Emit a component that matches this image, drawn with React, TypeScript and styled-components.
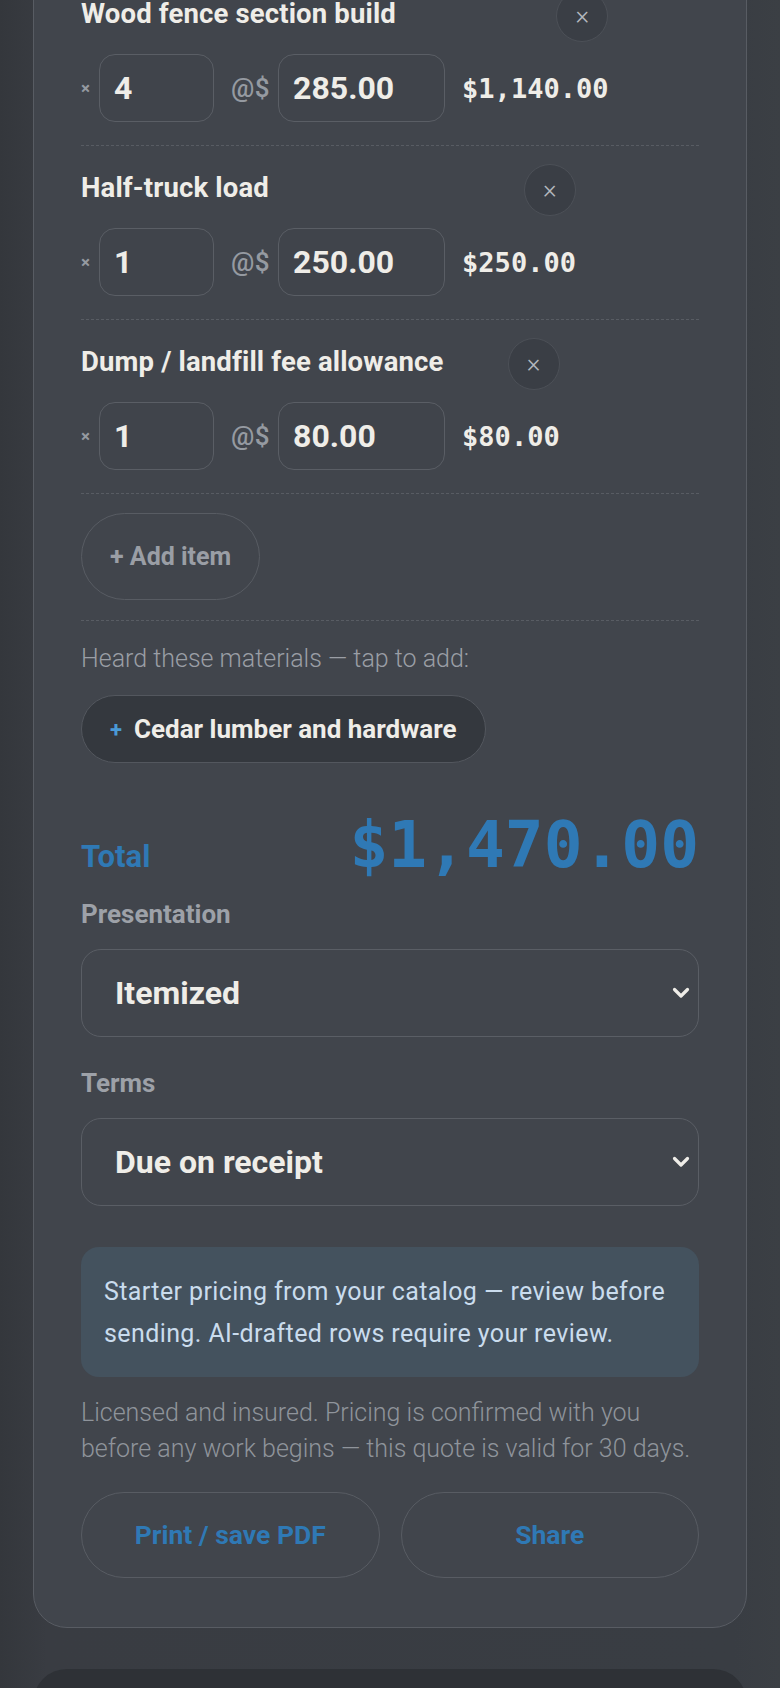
import styled, { createGlobalStyle } from 'styled-components';

const GlobalStyle = createGlobalStyle`
  * {
    box-sizing: border-box;
  }
  html, body {
    margin: 0;
    padding: 0;
  }
  body {
    background: linear-gradient(90deg, #34373c 0%, #393c42 6%, #393d43 94%, #3b3f44 100%);
    font-family: Roboto, "Liberation Sans", sans-serif;
    color: #eeece7;
    overflow: hidden;
  }
`;

const Page = styled.main`
  margin-top: -78px;
  padding: 0 33px;
`;

const Card = styled.section`
  background: #41454c;
  border: 1px solid #585c63;
  border-radius: 34px;
  padding: 48px 47px 49px;
`;

const ItemList = styled.div`
  border-top: 1px dashed #585c63;
`;

const ItemRow = styled.div`
  display: grid;
  grid-template-columns: auto auto;
  justify-content: start;
  align-items: center;
  column-gap: 17px;
  row-gap: 12px;
  padding: 18px 0 23px;
  border-bottom: 1px dashed #585c63;
`;

const ItemName = styled.div`
  margin-bottom: 6px;
  font-size: 27.5px;
  font-weight: 700;
  letter-spacing: 0.15px;
  line-height: 1.2;
  color: #efede8;
`;

const RemoveButton = styled.button`
  justify-self: end;
  width: 52px;
  height: 52px;
  border-radius: 50%;
  border: 1px solid #4c5057;
  background: #3a3e45;
  color: #b4b8be;
  font-family: Roboto, sans-serif;
  font-size: 26px;
  font-weight: 300;
  line-height: 1;
  padding: 0 0 2px;
  display: flex;
  align-items: center;
  justify-content: center;
`;

const QtyLine = styled.div`
  display: flex;
  align-items: center;
`;

const Times = styled.span`
  width: 10px;
  margin-right: 8px;
  font-size: 17px;
  font-weight: 700;
  color: #959aa1;
`;

const At = styled.span`
  margin: 0 8px 0 17px;
  font-size: 26px;
  font-weight: 500;
  letter-spacing: 0.5px;
  color: #959aa1;
`;

const NumberInput = styled.input<{ $width: number }>`
  width: ${(p) => p.$width}px;
  height: 68px;
  padding: 0 14px;
  border: 1.5px solid #5a5e65;
  border-radius: 16px;
  background: #40444b;
  color: #efede8;
  font-family: Roboto, sans-serif;
  font-size: 32px;
  font-weight: 700;
  outline: none;
`;

const LineTotal = styled.span`
  font-family: "DejaVu Sans Mono", "Liberation Mono", monospace;
  font-size: 27px;
  font-weight: 700;
  color: #efede8;
`;

const AddRow = styled.div`
  padding: 19px 0 20px;
  border-bottom: 1px dashed #585c63;
`;

const AddButton = styled.button`
  height: 87px;
  padding: 0 28px;
  border-radius: 44px;
  border: 1.5px solid #585c63;
  background: transparent;
  color: #9a9ea5;
  font-family: Roboto, sans-serif;
  font-size: 25px;
  font-weight: 700;
`;

const Hint = styled.p`
  margin: 21px 0 0;
  font-size: 25px;
  font-weight: 300;
  line-height: 34px;
  color: #9a9ea5;
`;

const Chip = styled.button`
  margin-top: 19px;
  height: 68px;
  padding: 0 28px;
  display: inline-flex;
  align-items: center;
  gap: 12px;
  border-radius: 34px;
  border: 1.5px solid #53575e;
  background: #34383e;
  color: #efede8;
  font-family: Roboto, sans-serif;
  font-size: 26px;
  font-weight: 700;
`;

const ChipPlus = styled.span`
  color: #4a9ad6;
  font-size: 22px;
`;

const TotalRow = styled.div`
  margin-top: 50px;
  display: flex;
  justify-content: space-between;
  align-items: baseline;
`;

const TotalLabel = styled.span`
  font-size: 31px;
  font-weight: 700;
  color: #2f79b5;
`;

const TotalValue = styled.span`
  font-family: "DejaVu Sans Mono", "Liberation Mono", monospace;
  font-size: 64.5px;
  font-weight: 700;
  line-height: 1;
  color: #2f79b5;
`;

const Field = styled.div`
  margin-top: 21px;
  & + & {
    margin-top: 31px;
  }
`;

const FieldLabel = styled.div`
  font-size: 26px;
  font-weight: 700;
  line-height: 30px;
  color: #9da1a8;
`;

const SelectBox = styled.div`
  margin-top: 20px;
  height: 88px;
  padding: 0 8px 0 33px;
  display: flex;
  align-items: center;
  justify-content: space-between;
  border: 1.5px solid #5a5e65;
  border-radius: 20px;
  font-size: 32px;
  font-weight: 700;
  color: #efede8;
`;

const Notice = styled.div`
  margin-top: 41px;
  padding: 24px 23px 22px;
  border-radius: 18px;
  background: #44525e;
  color: #cadced;
  font-size: 25px;
  letter-spacing: 0.4px;
  line-height: 42px;
`;

const Fineprint = styled.p`
  margin: 18px 0 0;
  font-size: 25px;
  font-weight: 300;
  line-height: 36px;
  color: #8f949b;
`;

const Actions = styled.div`
  margin-top: 25px;
  display: grid;
  grid-template-columns: 1fr 1fr;
  gap: 21px;
`;

const ActionButton = styled.button`
  height: 86px;
  border-radius: 43px;
  border: 1.5px solid #585c63;
  background: transparent;
  color: #2f79b5;
  font-family: Roboto, sans-serif;
  font-size: 26.5px;
  font-weight: 700;
`;

const NextPanel = styled.div`
  margin-top: 41px;
  height: 120px;
  border-radius: 34px 34px 0 0;
  background: #2e3136;
`;

const Chevron = () => (
  <svg width="18" height="12" viewBox="0 0 18 12" fill="none">
    <path d="M2.5 2.5 L9 9 L15.5 2.5" stroke="#efede8" strokeWidth="3.2" strokeLinecap="round" strokeLinejoin="round" />
  </svg>
);

type LineItem = { name: string; qty: string; price: string; total: string };

const items: LineItem[] = [
  { name: 'Wood fence section build', qty: '4', price: '285.00', total: '$1,140.00' },
  { name: 'Half-truck load', qty: '1', price: '250.00', total: '$250.00' },
  { name: 'Dump / landfill fee allowance', qty: '1', price: '80.00', total: '$80.00' },
];

export default function App() {
  return (
    <>
      <GlobalStyle />
      <Page>
        <Card>
          <ItemList>
            {items.map((item) => (
              <ItemRow key={item.name}>
                <ItemName>{item.name}</ItemName>
                <RemoveButton aria-label="Remove">×</RemoveButton>
                <QtyLine>
                  <Times>×</Times>
                  <NumberInput $width={115} defaultValue={item.qty} />
                  <At>@$</At>
                  <NumberInput $width={167} defaultValue={item.price} />
                </QtyLine>
                <LineTotal>{item.total}</LineTotal>
              </ItemRow>
            ))}
            <AddRow>
              <AddButton>+ Add item</AddButton>
            </AddRow>
          </ItemList>

          <Hint>Heard these materials — tap to add:</Hint>
          <Chip>
            <ChipPlus>+</ChipPlus>
            Cedar lumber and hardware
          </Chip>

          <TotalRow>
            <TotalLabel>Total</TotalLabel>
            <TotalValue>$1,470.00</TotalValue>
          </TotalRow>

          <Field>
            <FieldLabel>Presentation</FieldLabel>
            <SelectBox>
              Itemized
              <Chevron />
            </SelectBox>
          </Field>
          <Field>
            <FieldLabel>Terms</FieldLabel>
            <SelectBox>
              Due on receipt
              <Chevron />
            </SelectBox>
          </Field>

          <Notice>
            Starter pricing from your catalog — review before sending. AI-drafted rows require your review.
          </Notice>
          <Fineprint>
            Licensed and insured. Pricing is confirmed with you before any work begins — this quote is valid for 30 days.
          </Fineprint>

          <Actions>
            <ActionButton>Print / save PDF</ActionButton>
            <ActionButton>Share</ActionButton>
          </Actions>
        </Card>
        <NextPanel />
      </Page>
    </>
  );
}
